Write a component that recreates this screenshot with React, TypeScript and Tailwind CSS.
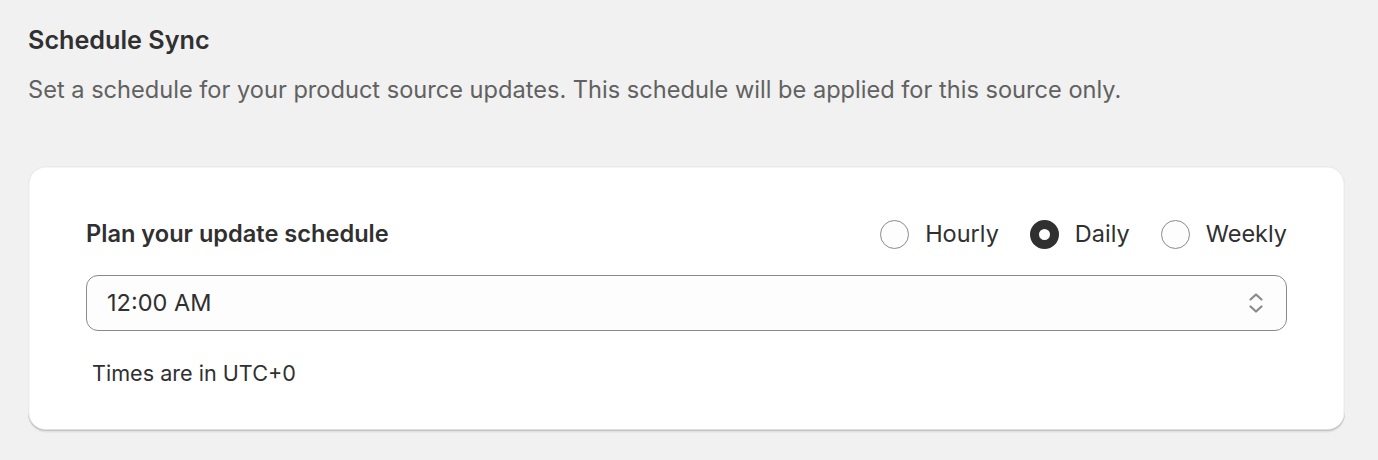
import React from "react";

function Radio({ checked, label }: { checked?: boolean; label: string }) {
  return (
    <label className="flex items-center gap-[16px]">
      {checked ? (
        <span className="box-border w-[29px] h-[29px] rounded-full border-[9px] border-[#303030] bg-white" />
      ) : (
        <span className="box-border w-[29px] h-[29px] rounded-full border-[1.5px] border-[#8a8a8a] bg-[#fdfdfd]" />
      )}
      <span className="text-[23.5px] leading-[36px] text-[#303030]">{label}</span>
    </label>
  );
}

export default function App() {
  return (
    <div
      className="w-[1378px] h-[460px] bg-[#f1f1f1] overflow-hidden"
      style={{ fontFamily: "Inter, 'Noto Sans', sans-serif" }}
    >
      <div className="pl-[28px] pr-[33px] pt-[22px]">
        <h2 className="text-[25.2px] leading-[36px] font-semibold text-[#303030]">Schedule Sync</h2>
        <p className="mt-[14px] text-[23.6px] leading-[36px] text-[#616161]">
          Set a schedule for your product source updates. This schedule will be applied for this source only.
        </p>
        <div className="mt-[58px] h-[265px] rounded-[18px] bg-white shadow-[0_1.5px_0_0_rgba(26,26,26,0.07),inset_0_-1.5px_0_0_rgba(0,0,0,0.17),inset_0_0_0_1.5px_rgba(0,0,0,0.08)] px-[58px] pt-[50px]">
          <div className="flex items-center justify-between h-[36px]">
            <span className="text-[23.6px] leading-[36px] font-semibold text-[#303030]">Plan your update schedule</span>
            <div className="flex items-center gap-[31px]">
              <Radio label="Hourly" />
              <Radio label="Daily" checked />
              <Radio label="Weekly" />
            </div>
          </div>
          <div className="mt-[23px] h-[56px] rounded-[12px] border-[1.5px] border-[#8a8a8a] bg-[#fdfdfd] flex items-center justify-between pl-[20px] pr-[22px]">
            <span className="text-[23.5px] text-[#303030]">12:00 AM</span>
            <svg width="16" height="24" viewBox="0 0 16 24" fill="none" stroke="#8a8a8a" strokeWidth="2.2" strokeLinecap="round" strokeLinejoin="round">
              <path d="M2.5 8.5 L8 3.5 L13.5 8.5" />
              <path d="M2.5 15.5 L8 20.5 L13.5 15.5" />
            </svg>
          </div>
          <p className="mt-[26px] pl-[6px] text-[21.6px] leading-[32px] text-[#303030]">Times are in UTC+0</p>
        </div>
      </div>
    </div>
  );
}
